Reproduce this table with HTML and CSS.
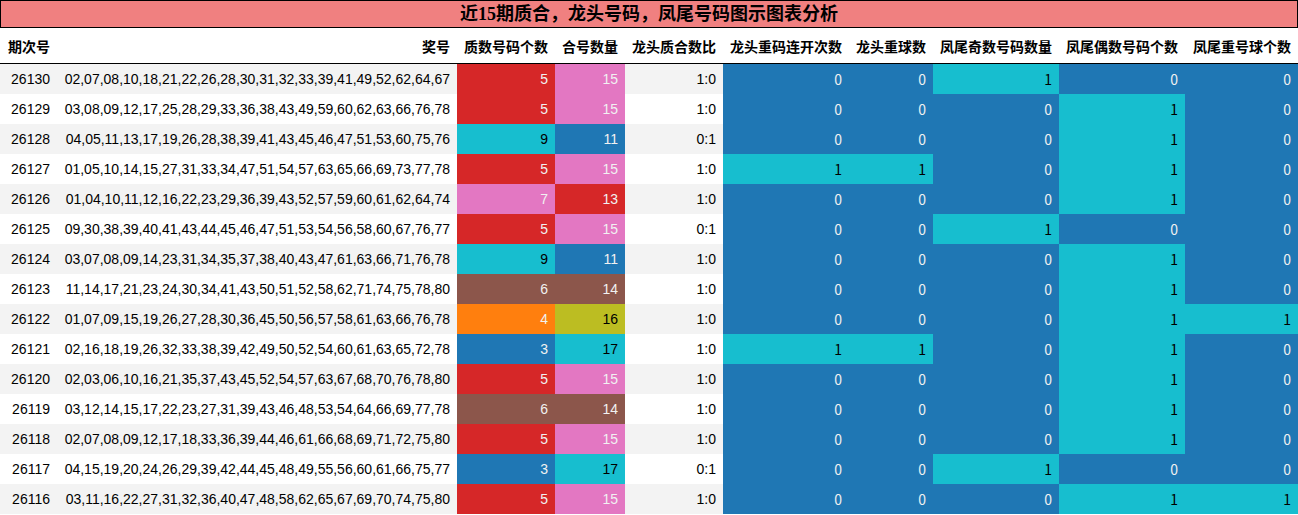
FILE: index.html
```html
<!DOCTYPE html>
<html lang="zh">
<head>
<meta charset="utf-8">
<title>近15期质合，龙头号码，凤尾号码图示图表分析</title>
<link rel="stylesheet" href="styles.css">
</head>
<body>
<div class="title">近15期质合，龙头号码，凤尾号码图示图表分析</div>
<table class="grid">
<colgroup>
<col class="w-issue"><col class="w-nums"><col class="w-98"><col class="w-70"><col class="w-98"><col class="w-126"><col class="w-84"><col class="w-126"><col class="w-126"><col class="w-113">
</colgroup>
<thead>
<tr><th>期次号</th><th>奖号</th><th>质数号码个数</th><th>合号数量</th><th>龙头质合数比</th><th>龙头重码连开次数</th><th>龙头重球数</th><th>凤尾奇数号码数量</th><th>凤尾偶数号码个数</th><th>凤尾重号球个数</th></tr>
</thead>
<tbody>
<tr class="odd"><td>26130</td><td>02,07,08,10,18,21,22,26,28,30,31,32,33,39,41,49,52,62,64,67</td><td class="red">5</td><td class="pink">15</td><td>1:0</td><td class="cj blue">0</td><td class="cj blue">0</td><td class="cj cyan">1</td><td class="cj blue">0</td><td class="cj blue">0</td></tr>
<tr><td>26129</td><td>03,08,09,12,17,25,28,29,33,36,38,43,49,59,60,62,63,66,76,78</td><td class="red">5</td><td class="pink">15</td><td>1:0</td><td class="cj blue">0</td><td class="cj blue">0</td><td class="cj blue">0</td><td class="cj cyan">1</td><td class="cj blue">0</td></tr>
<tr class="odd"><td>26128</td><td>04,05,11,13,17,19,26,28,38,39,41,43,45,46,47,51,53,60,75,76</td><td class="cyan">9</td><td class="blue">11</td><td>0:1</td><td class="cj blue">0</td><td class="cj blue">0</td><td class="cj blue">0</td><td class="cj cyan">1</td><td class="cj blue">0</td></tr>
<tr><td>26127</td><td>01,05,10,14,15,27,31,33,34,47,51,54,57,63,65,66,69,73,77,78</td><td class="red">5</td><td class="pink">15</td><td>1:0</td><td class="cj cyan">1</td><td class="cj cyan">1</td><td class="cj blue">0</td><td class="cj cyan">1</td><td class="cj blue">0</td></tr>
<tr class="odd"><td>26126</td><td>01,04,10,11,12,16,22,23,29,36,39,43,52,57,59,60,61,62,64,74</td><td class="pink">7</td><td class="red">13</td><td>1:0</td><td class="cj blue">0</td><td class="cj blue">0</td><td class="cj blue">0</td><td class="cj cyan">1</td><td class="cj blue">0</td></tr>
<tr><td>26125</td><td>09,30,38,39,40,41,43,44,45,46,47,51,53,54,56,58,60,67,76,77</td><td class="red">5</td><td class="pink">15</td><td>0:1</td><td class="cj blue">0</td><td class="cj blue">0</td><td class="cj cyan">1</td><td class="cj blue">0</td><td class="cj blue">0</td></tr>
<tr class="odd"><td>26124</td><td>03,07,08,09,14,23,31,34,35,37,38,40,43,47,61,63,66,71,76,78</td><td class="cyan">9</td><td class="blue">11</td><td>1:0</td><td class="cj blue">0</td><td class="cj blue">0</td><td class="cj blue">0</td><td class="cj cyan">1</td><td class="cj blue">0</td></tr>
<tr><td>26123</td><td>11,14,17,21,23,24,30,34,41,43,50,51,52,58,62,71,74,75,78,80</td><td class="brown">6</td><td class="brown">14</td><td>1:0</td><td class="cj blue">0</td><td class="cj blue">0</td><td class="cj blue">0</td><td class="cj cyan">1</td><td class="cj blue">0</td></tr>
<tr class="odd"><td>26122</td><td>01,07,09,15,19,26,27,28,30,36,45,50,56,57,58,61,63,66,76,78</td><td class="orange">4</td><td class="olive">16</td><td>1:0</td><td class="cj blue">0</td><td class="cj blue">0</td><td class="cj blue">0</td><td class="cj cyan">1</td><td class="cj cyan">1</td></tr>
<tr><td>26121</td><td>02,16,18,19,26,32,33,38,39,42,49,50,52,54,60,61,63,65,72,78</td><td class="blue">3</td><td class="cyan">17</td><td>1:0</td><td class="cj cyan">1</td><td class="cj cyan">1</td><td class="cj blue">0</td><td class="cj cyan">1</td><td class="cj blue">0</td></tr>
<tr class="odd"><td>26120</td><td>02,03,06,10,16,21,35,37,43,45,52,54,57,63,67,68,70,76,78,80</td><td class="red">5</td><td class="pink">15</td><td>1:0</td><td class="cj blue">0</td><td class="cj blue">0</td><td class="cj blue">0</td><td class="cj cyan">1</td><td class="cj blue">0</td></tr>
<tr><td>26119</td><td>03,12,14,15,17,22,23,27,31,39,43,46,48,53,54,64,66,69,77,78</td><td class="brown">6</td><td class="brown">14</td><td>1:0</td><td class="cj blue">0</td><td class="cj blue">0</td><td class="cj blue">0</td><td class="cj cyan">1</td><td class="cj blue">0</td></tr>
<tr class="odd"><td>26118</td><td>02,07,08,09,12,17,18,33,36,39,44,46,61,66,68,69,71,72,75,80</td><td class="red">5</td><td class="pink">15</td><td>1:0</td><td class="cj blue">0</td><td class="cj blue">0</td><td class="cj blue">0</td><td class="cj cyan">1</td><td class="cj blue">0</td></tr>
<tr><td>26117</td><td>04,15,19,20,24,26,29,39,42,44,45,48,49,55,56,60,61,66,75,77</td><td class="blue">3</td><td class="cyan">17</td><td>0:1</td><td class="cj blue">0</td><td class="cj blue">0</td><td class="cj cyan">1</td><td class="cj blue">0</td><td class="cj blue">0</td></tr>
<tr class="odd"><td>26116</td><td>03,11,16,22,27,31,32,36,40,47,48,58,62,65,67,69,70,74,75,80</td><td class="red">5</td><td class="pink">15</td><td>1:0</td><td class="cj blue">0</td><td class="cj blue">0</td><td class="cj blue">0</td><td class="cj cyan">1</td><td class="cj cyan">1</td></tr>
</tbody>
</table>
</body>
</html>
```
FILE: styles.css
```css
html, body {
  margin: 0;
  padding: 0;
  background: #ffffff;
}

body {
  font-family: "Liberation Sans", "Noto Sans CJK SC", sans-serif;
  font-size: 14px;
  color: #000000;
}

.title {
  box-sizing: border-box;
  width: 1298px;
  height: 28px;
  border: 1px solid #000000;
  background: #f08080;
  text-align: center;
  font-family: "Liberation Serif", "Noto Sans CJK SC", serif;
  font-weight: bold;
  font-size: 18px;
  line-height: 26px;
}

.grid {
  border-collapse: collapse;
  table-layout: fixed;
  width: 1298px;
}

.w-issue { width: 57px; }
.w-nums { width: 400px; }
.w-98 { width: 98px; }
.w-70 { width: 70px; }
.w-126 { width: 126px; }
.w-84 { width: 84px; }
.w-113 { width: 113px; }

.grid th {
  height: 35px;
  padding: 0 7px 0 6px;
  text-align: right;
  vertical-align: middle;
  font-weight: bold;
  font-size: 14px;
  white-space: nowrap;
  border-bottom: 1px solid #000000;
  background: #ffffff;
}

.grid td {
  height: 30px;
  padding: 0 7px 0 6px;
  text-align: right;
  vertical-align: middle;
  white-space: nowrap;
  background: #ffffff;
}

.grid tr.odd td {
  background: #f3f3f3;
}

.grid td.cj {
  font-family: "Noto Sans CJK SC", sans-serif;
}

.grid tr td.red { background: #d62728; color: #f1f1f1; }
.grid tr td.pink { background: #e377c2; color: #f1f1f1; }
.grid tr td.blue { background: #1f77b4; color: #f1f1f1; }
.grid tr td.cyan { background: #17becf; color: #000000; }
.grid tr td.brown { background: #8c564b; color: #f1f1f1; }
.grid tr td.orange { background: #ff7f0e; color: #f1f1f1; }
.grid tr td.olive { background: #bcbd22; color: #000000; }
```
